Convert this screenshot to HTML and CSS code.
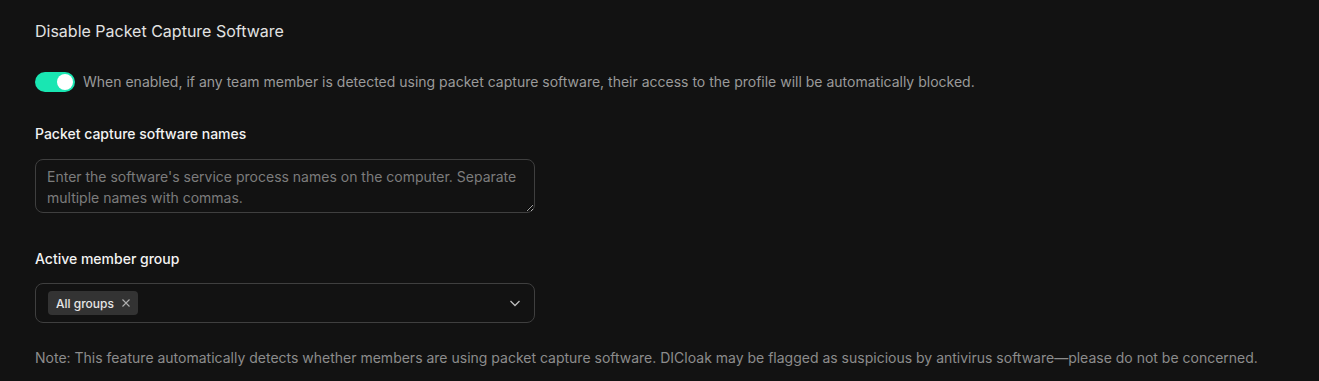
FILE: index.html
```html
<!DOCTYPE html>
<html lang="en">
<head>
<meta charset="utf-8">
<title>Disable Packet Capture Software</title>
<link rel="stylesheet" href="styles.css">
</head>
<body>
<section class="panel">
  <h2 class="title">Disable Packet Capture Software</h2>
  <div class="switch-row">
    <span class="switch" role="switch" aria-checked="true"><span class="knob"></span></span>
    <span class="switch-text">When enabled, if any team member is detected using packet capture software, their access to the profile will be automatically blocked.</span>
  </div>
  <div class="field">
    <label class="label" for="names">Packet capture software names</label>
    <textarea id="names" class="textarea" placeholder="Enter the software's service process names on the computer. Separate multiple names with commas."></textarea>
  </div>
  <div class="field">
    <div class="label">Active member group</div>
    <div class="select">
      <span class="tag">All groups
        <svg class="tag-x" width="10" height="10" viewBox="0 0 10 10"><path d="M1.5 1.5L8.5 8.5M8.5 1.5L1.5 8.5" stroke="currentColor" stroke-width="1.1" fill="none"/></svg>
      </span>
      <svg class="chevron" width="12" height="12" viewBox="0 0 12 12"><path d="M1.5 4L6 8.5L10.5 4" stroke="currentColor" stroke-width="1.3" fill="none"/></svg>
    </div>
  </div>
  <p class="note">Note: This feature automatically detects whether members are using packet capture software. DICloak may be flagged as suspicious by antivirus software—please do not be concerned.</p>
</section>
</body>
</html>
```
FILE: styles.css
```css
html, body {
  margin: 0;
  padding: 0;
  background: #121212;
}
body {
  font-family: Inter, "Noto Sans", sans-serif;
  color: #e6e6e6;
  width: 1319px;
  height: 381px;
  overflow: hidden;
}
.panel {
  padding: 20px 35px 0;
}
.title {
  margin: 0;
  font-size: 16px;
  font-weight: 400;
  line-height: 22px;
  color: #e2e2e2;
}
.switch-row {
  display: flex;
  align-items: center;
  gap: 8px;
  margin-top: 30px;
}
.switch {
  width: 40px;
  height: 20px;
  border-radius: 10px;
  background: #19e6b2;
  position: relative;
  flex: none;
}
.knob {
  position: absolute;
  right: 2px;
  top: 2px;
  width: 16px;
  height: 16px;
  border-radius: 50%;
  background: #fff;
}
.switch-text {
  font-size: 14px;
  line-height: 20px;
  color: #9a9a9a;
}
.field {
  display: flex;
  flex-direction: column;
  margin-top: 32px;
}
.field + .field {
  margin-top: 36px;
}
.label {
  font-size: 14px;
  font-weight: 500;
  line-height: 20px;
  color: #f2f2f2;
}
.textarea {
  margin-top: 15px;
  width: 500px;
  height: 54px;
  box-sizing: border-box;
  background: transparent;
  border: 1px solid #3f3f3f;
  border-radius: 8px;
  padding: 6px 11px;
  font-family: Inter, "Noto Sans", sans-serif;
  font-size: 14px;
  line-height: 21px;
  color: #ddd;
  resize: vertical;
  outline: none;
}
.textarea::placeholder {
  color: #7c7c7c;
}
.select {
  margin-top: 14px;
  width: 500px;
  height: 40px;
  box-sizing: border-box;
  border: 1px solid #3f3f3f;
  border-radius: 8px;
  display: flex;
  align-items: center;
  justify-content: space-between;
  padding: 0 13px 0 12px;
}
.tag {
  display: inline-flex;
  align-items: center;
  gap: 7px;
  height: 24px;
  padding: 0 7px 0 8px;
  border-radius: 4px;
  background: #333333;
  font-size: 12px;
  font-weight: 500;
  color: #e6e6e6;
}
.tag-x {
  color: #b0b0b0;
}
.chevron {
  color: #bdbdbd;
}
.note {
  margin: 25px 0 0;
  font-size: 14px;
  line-height: 20px;
  color: #8c8c8c;
}
```
